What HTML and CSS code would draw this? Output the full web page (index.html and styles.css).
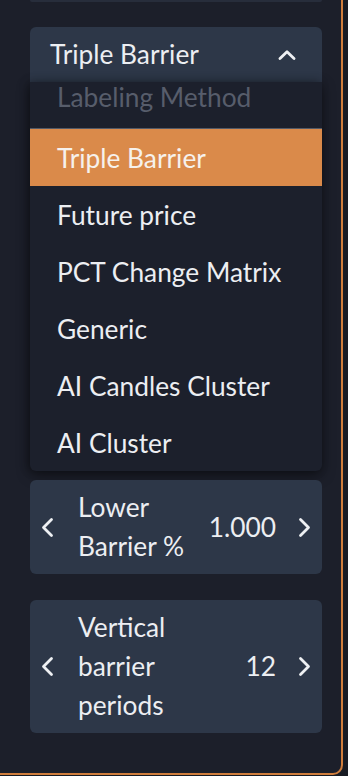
FILE: index.html
```html
<!DOCTYPE html>
<html>
<head>
<meta charset="utf-8">
<link rel="stylesheet" href="styles.css">
</head>
<body>
<div class="panel">
  <div class="top-card"></div>
  <div class="select">
    <span class="select-text">Triple Barrier</span>
    <svg class="chev-up" width="18" height="10" viewBox="0 0 18 10"><path d="M2 8.5 L9 1.8 L16 8.5" fill="none" stroke="#eef0f3" stroke-width="2.8" stroke-linecap="round" stroke-linejoin="round"/></svg>
  </div>
  <div class="menu">
    <div class="menu-header">Labeling Method</div>
    <div class="menu-item active">Triple Barrier</div>
    <div class="menu-item">Future price</div>
    <div class="menu-item">PCT Change Matrix</div>
    <div class="menu-item">Generic</div>
    <div class="menu-item">AI Candles Cluster</div>
    <div class="menu-item">AI Cluster</div>
  </div>
  <div class="stepper first">
    <svg class="chev" width="13" height="21" viewBox="0 0 13 21"><path d="M10.5 2.5 L2.5 10.5 L10.5 18.5" fill="none" stroke="#eef0f3" stroke-width="2.8" stroke-linecap="round" stroke-linejoin="round"/></svg>
    <div class="label">Lower Barrier %</div>
    <div class="value">1.000</div>
    <svg class="chev" width="13" height="21" viewBox="0 0 13 21"><path d="M2.5 2.5 L10.5 10.5 L2.5 18.5" fill="none" stroke="#eef0f3" stroke-width="2.8" stroke-linecap="round" stroke-linejoin="round"/></svg>
  </div>
  <div class="stepper second">
    <svg class="chev" width="13" height="21" viewBox="0 0 13 21"><path d="M10.5 2.5 L2.5 10.5 L10.5 18.5" fill="none" stroke="#eef0f3" stroke-width="2.8" stroke-linecap="round" stroke-linejoin="round"/></svg>
    <div class="label">Vertical barrier periods</div>
    <div class="value">12</div>
    <svg class="chev" width="13" height="21" viewBox="0 0 13 21"><path d="M2.5 2.5 L10.5 10.5 L2.5 18.5" fill="none" stroke="#eef0f3" stroke-width="2.8" stroke-linecap="round" stroke-linejoin="round"/></svg>
  </div>
</div>
</body>
</html>
```

FILE: styles.css
```css
html, body {
  margin: 0;
  padding: 0;
  background: #181b23;
}
body {
  font-family: Lato, "Open Sans", sans-serif;
  color: #eceef2;
  width: 348px;
  height: 776px;
  overflow: hidden;
}
.panel {
  box-sizing: border-box;
  width: 343px;
  height: 775px;
  background: #1c1f2a;
  border-right: 2px solid #cf7d3c;
  border-bottom: 2px solid #cf7d3c;
  border-bottom-right-radius: 10px;
  padding: 0 19px 0 30px;
  display: flex;
  flex-direction: column;
}
.top-card {
  height: 2px;
  background: #272d3b;
  border-radius: 0 0 4px 4px;
  margin-bottom: 25px;
}
.select {
  height: 55px;
  background: #2d3748;
  border-radius: 6px 6px 0 0;
  display: flex;
  align-items: center;
  justify-content: space-between;
  padding: 0 26px 0 20px;
  font-size: 26.3px;
}
.select-text {
  line-height: 30px;
  padding-bottom: 1px;
}
.chev-up {
  display: block;
}
.menu {
  background: #1c202c;
  border-radius: 0 0 6px 6px;
  box-shadow: 0 4px 14px rgba(0, 0, 0, 0.45), -2px 0 8px rgba(0, 0, 0, 0.25);
  overflow: hidden;
  font-size: 26.3px;
}
.menu-header {
  height: 47px;
  box-sizing: border-box;
  padding-left: 27px;
  line-height: 30px;
  color: #575d6b;
  border-bottom: 1px solid #545a66;
}
.menu-item {
  height: 57px;
  line-height: 58px;
  padding-left: 27px;
}
.menu-item.active {
  background: #da8a4a;
  color: #f6f1ec;
}
.stepper {
  background: #2d3748;
  border-radius: 6px;
  display: flex;
  align-items: center;
  padding: 8px 11px 8px 11px;
  font-size: 26.3px;
  line-height: 39px;
}
.stepper.first {
  margin-top: 9px;
}
.stepper.second {
  margin-top: 26px;
}
.chev {
  flex: 0 0 auto;
  display: block;
}
.label {
  flex: 0 0 122px;
  margin-left: 24px;
}
.value {
  flex: 1 1 auto;
  text-align: right;
  margin-right: 22px;
}
```
